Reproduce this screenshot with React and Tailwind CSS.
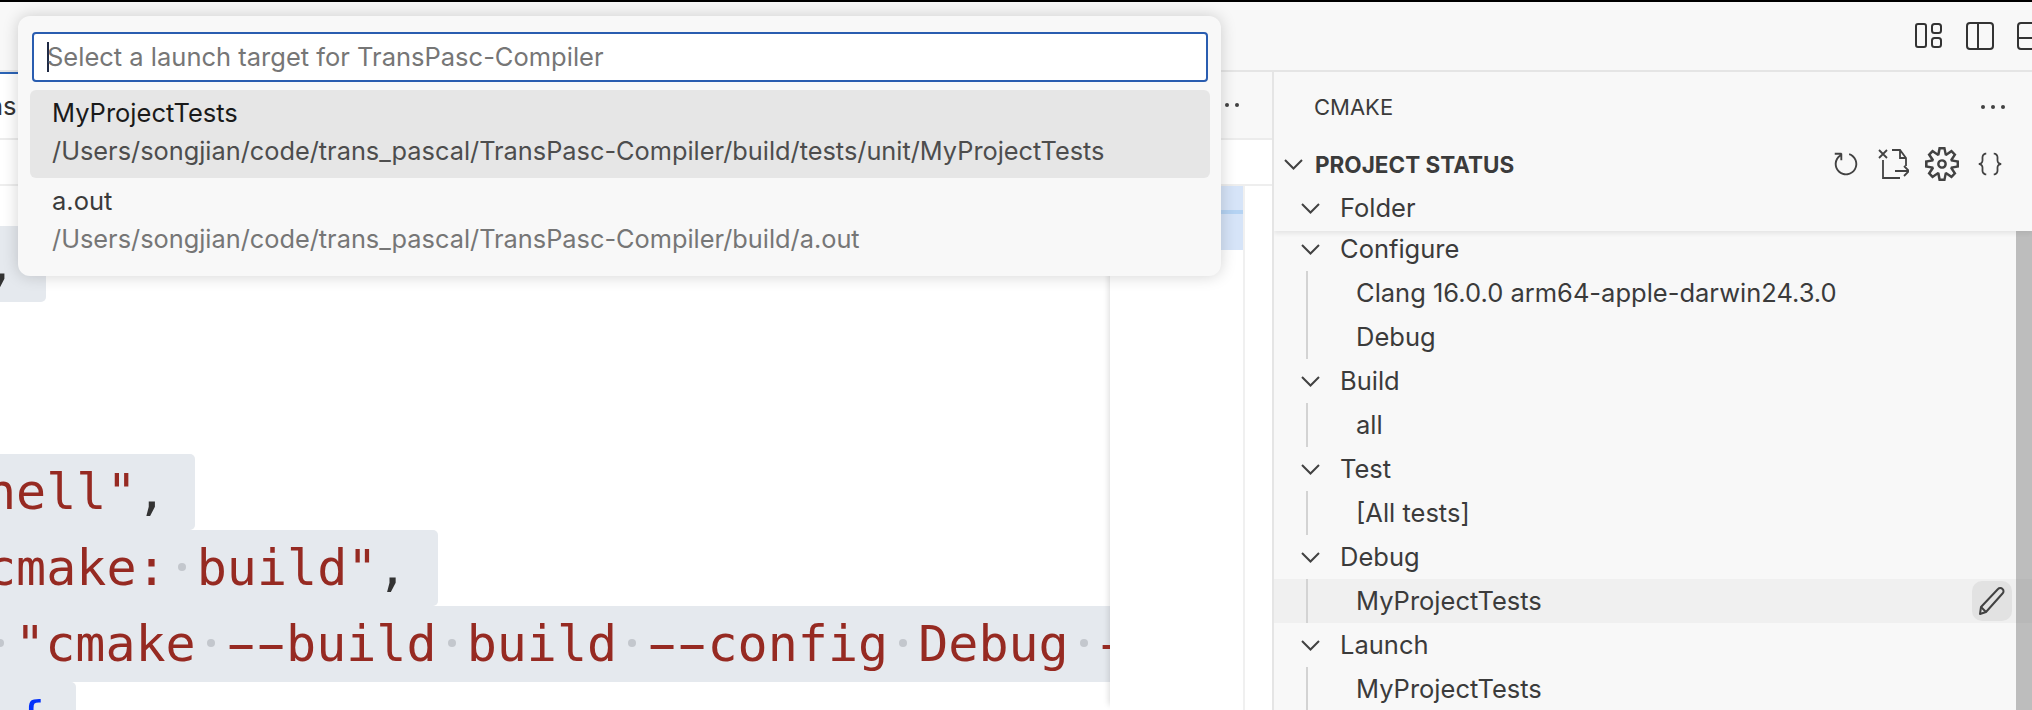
import React from 'react';
import { VscRefresh, VscSettingsGear, VscJson } from 'react-icons/vsc';

const Chevron = () => (
  <svg width="19" height="11" viewBox="0 0 19 11" fill="none" stroke="#424242" strokeWidth="2" className="shrink-0">
    <path d="M1 1l8.5 8.5L18 1" />
  </svg>
);

const Dots = ({ className }) => (
  <svg width="26" height="6" viewBox="0 0 26 6" fill="#424242" className={className}>
    <circle cx="3" cy="3" r="2" />
    <circle cx="13" cy="3" r="2" />
    <circle cx="23" cy="3" r="2" />
  </svg>
);

const CollapseFile = () => (
  <svg width="32" height="32" viewBox="0 0 32 32" fill="none" stroke="#424242" strokeWidth="1.8">
    <path d="M2 2l8 8M10 2l-8 8" />
    <path d="M6 12v18h17" />
    <path d="M15 2h8l6 8v8M23 2v8h6" />
    <path d="M18 23h14M27 18l5 5-5 5" />
  </svg>
);

const Pencil = () => (
  <svg width="28" height="30" viewBox="0 0 28 30" fill="none" stroke="#424242" strokeWidth="2" strokeLinejoin="round">
    <path d="M2 28l1-7L20 3a3 3 0 0 1 4.5 0 3 3 0 0 1 0 4.5L8 26z" />
    <path d="M3 21l5 5" />
  </svg>
);

// render-whitespace marker, one mono cell wide
const Dot = () => <span className="inline-block w-[8px] h-[8px] mx-[11.05px] mb-[14px] rounded-full bg-[#c3c7cd]"></span>;
const Str = ({ children }) => <span className="text-[#962a22]">{children}</span>;
const Comma = () => <span className="text-[#333333]">,</span>;
// the hyphen of the reference's mono font nearly fills its cell
const Hy = () => <span className="inline-block scale-x-[1.8] text-[#962a22]">-</span>;

const Header = ({ label, pad = 'h-[44px]' }) => (
  <div className={`flex items-center pl-[27px] gap-[20px] ${pad}`}>
    <Chevron />
    <span className="pt-[1px]">{label}</span>
  </div>
);

const Child = ({ label, hover }) => (
  <div className={`flex h-[44px] pl-[32px] ${hover ? 'bg-[#f0f0f0]' : ''}`}>
    <div className="w-[2px] h-full bg-[#d3d3d3]"></div>
    <div className="ml-[48px] pt-[1px] flex items-center flex-1">{label}</div>
    {hover && (
      <div className="flex items-center justify-center w-[40px] h-[40px] mt-[2px] mr-[20px] rounded-[10px] bg-[#e2e2e2]">
        <Pencil />
      </div>
    )}
  </div>
);

const CodeLine = ({ children, pr, ml = '-ml-[14px]' }) => (
  <div className={`h-[76px] whitespace-pre ${ml}`}>
    <span className={`inline-block h-full bg-[#e5e9ee] rounded-r-[5px] leading-[76px] ${pr}`}>{children}</span>
  </div>
);

export default function App() {
  return (
    <div className="relative w-[2032px] h-[710px] overflow-hidden flex flex-col bg-white text-[#3b3b3b] font-['Inter',sans-serif] text-[25.5px]">
      <div className="h-[2px] bg-black shrink-0"></div>

      {/* title bar */}
      <div className="h-[70px] shrink-0 bg-[#f8f8f8] border-b-2 border-[#e5e5e5] flex items-center">
        <div className="ml-[1915px] flex items-center gap-[23px] text-[#333333]">
          <svg width="28" height="26" viewBox="0 0 28 26" fill="none" stroke="#333" strokeWidth="2">
            <rect x="1" y="1" width="10" height="23" rx="2" />
            <rect x="17" y="1" width="9" height="9" rx="2.5" />
            <rect x="17" y="15" width="9" height="9" rx="2.5" />
          </svg>
          <svg width="28" height="28" viewBox="0 0 28 28" fill="none" stroke="#333" strokeWidth="2">
            <rect x="1" y="1" width="26" height="26" rx="3" />
            <path d="M12 1v26" />
          </svg>
          <svg width="28" height="28" viewBox="0 0 28 28" fill="none" stroke="#333" strokeWidth="2" className="shrink-0">
            <rect x="1" y="1" width="26" height="26" rx="3" />
            <path d="M1 16h26" />
          </svg>
        </div>
      </div>

      <div className="flex flex-1 min-h-0">
        {/* editor */}
        <div className="w-[1272px] shrink-0 flex flex-col">
          <div className="h-[68px] shrink-0 bg-[#f8f8f8] border-b-2 border-[#ececec] flex items-stretch justify-between">
            <div className="w-[40px] overflow-hidden bg-white border-t-2 border-[#2b63b5] flex items-center text-[#333333]">
              <span className="-ml-[12px]">ns</span>
            </div>
            <Dots className="self-center mr-[32px]" />
          </div>
          <div className="h-[46px] shrink-0 bg-white border-b-2 border-[#eeeeee]"></div>
          <div className="flex flex-1 min-h-0">
            <div className="w-[1110px] shrink-0 overflow-hidden pt-[40px] font-['DejaVu_Sans_Mono',monospace] text-[50px]">
              <CodeLine pr="pr-[30px]"><Comma /></CodeLine>
              <div className="h-[152px]"></div>
              <CodeLine pr="pr-[28px]"><Str>hell"</Str><Comma /></CodeLine>
              <CodeLine pr="pr-[31px]"><Str>cmake:</Str><Dot /><Str>build"</Str><Comma /></CodeLine>
              <CodeLine pr="pr-[29px]" ml="-ml-[15px]">
                <Dot /><Str>"cmake</Str><Dot /><Hy /><Hy /><Str>build</Str><Dot /><Str>build</Str><Dot /><Hy /><Hy /><Str>config</Str><Dot /><Str>Debug</Str><Dot /><Hy /><Str>DCMAKE"</Str><Comma />
              </CodeLine>
              <CodeLine pr="pr-[30px]"><Dot /><span className="text-[#0431fa]">{'{'}</span></CodeLine>
            </div>
            <div className="w-[135px] shrink-0 border-r-2 border-[#f0f0f0] shadow-[-6px_0_6px_-5px_rgba(0,0,0,0.15)]">
              <div className="h-[64px] bg-[#d6e4f8] pt-[24px]">
                <div className="h-[4px] bg-[#b5d3f3]"></div>
              </div>
            </div>
            <div className="flex-1"></div>
          </div>
        </div>

        {/* cmake sidebar */}
        <div className="relative flex-1 overflow-hidden bg-[#f8f8f8] border-l-2 border-[#e5e5e5]">
          <div className="h-[70px] flex items-center justify-between pl-[40px] pr-[26px] text-[#3b3b3b] text-[22px]">
            <span>CMAKE</span>
            <Dots />
          </div>
          <div className="h-[44px] flex items-center pl-[10px] gap-[12px]">
            <Chevron />
            <span className="pt-[2px] font-bold text-[22.5px]">PROJECT STATUS</span>
            <div className="ml-auto mr-[27px] flex items-center gap-[16px]">
              <VscRefresh size={30} color="#424242" />
              <CollapseFile />
              <VscSettingsGear size={34} color="#424242" />
              <VscJson size={30} color="#424242" />
            </div>
          </div>
          <div className="h-[45px] shadow-[0_3px_4px_rgba(0,0,0,0.07)] relative">
            <Header label="Folder" />
          </div>
          <Header label="Configure" pad="h-[40px] pb-[4px]" />
          <Child label="Clang 16.0.0 arm64-apple-darwin24.3.0" />
          <Child label="Debug" />
          <Header label="Build" />
          <Child label="all" />
          <Header label="Test" />
          <Child label="[All tests]" />
          <Header label="Debug" />
          <Child label="MyProjectTests" hover />
          <Header label="Launch" />
          <Child label="MyProjectTests" />
          <div className="absolute right-0 top-[159px] bottom-0 w-[16px] bg-[#64646466]"></div>
        </div>
      </div>

      {/* quick pick */}
      <div className="absolute left-[18px] top-[16px] w-[1203px] h-[260px] rounded-[12px] bg-[#f8f8f8] shadow-[0_0_16px_rgba(0,0,0,0.18)] pt-[16px] pl-[12px] pr-[11px]">
        <div className="ml-[2px] mr-[2px] h-[50px] bg-white border-2 border-[#2a5db0] rounded-[4px] flex items-center pl-[13px] text-[#767676]">
          <span className="w-[2px] h-[30px] bg-[#1f2a44] shrink-0 -mr-[2px]"></span>
          <span className="pt-[1px]">Select a launch target for TransPasc-Compiler</span>
        </div>
        <div className="mt-[8px] h-[88px] rounded-[6px] bg-[#e6e6e6] pl-[22px] flex flex-col">
          <div className="h-[46px] flex items-center text-[#1a1a1a]">MyProjectTests</div>
          <div className="h-[30px] flex items-center text-[#4d4d4d] text-[25.34px]">/Users/songjian/code/trans_pascal/TransPasc-Compiler/build/tests/unit/MyProjectTests</div>
        </div>
        <div className="h-[88px] pl-[22px] flex flex-col">
          <div className="h-[46px] flex items-center text-[#3b3b3b]">a.out</div>
          <div className="h-[30px] flex items-center text-[#767676] text-[25.34px]">/Users/songjian/code/trans_pascal/TransPasc-Compiler/build/a.out</div>
        </div>
      </div>
    </div>
  );
}
